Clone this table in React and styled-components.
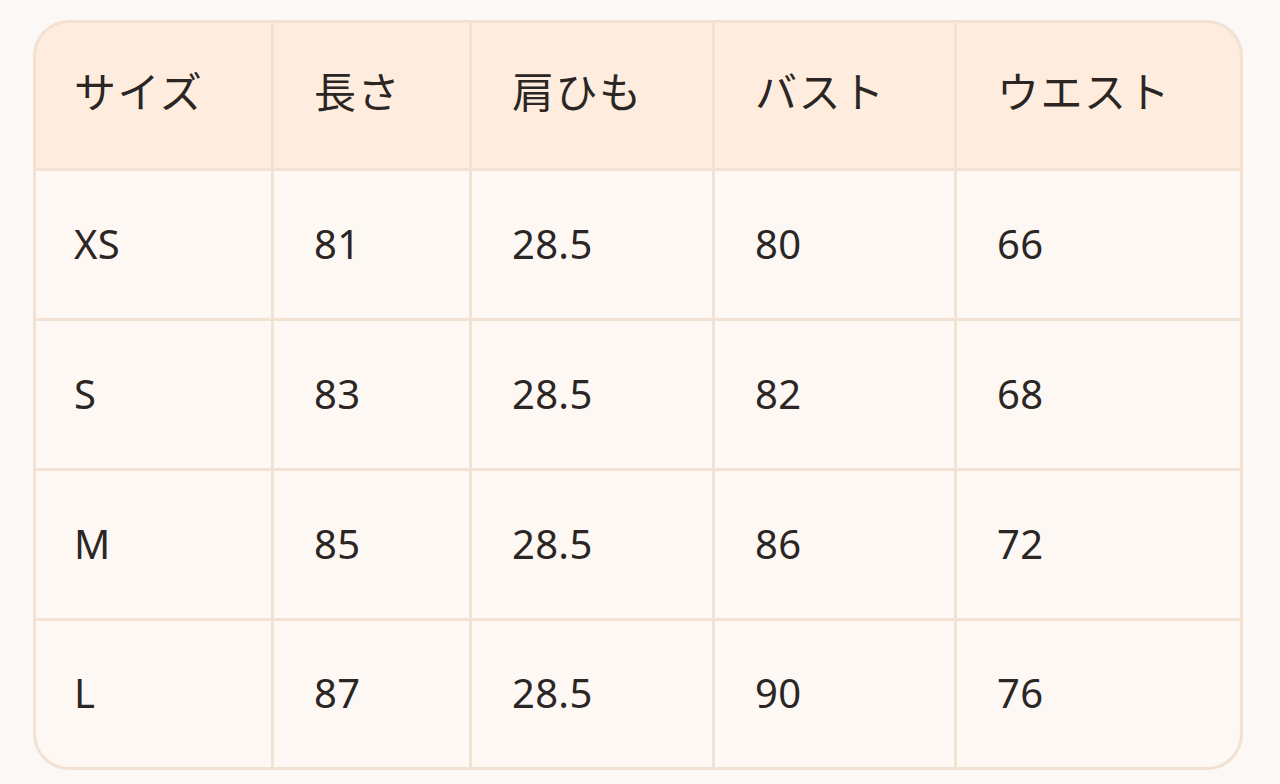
import React from 'react';
import styled, { createGlobalStyle } from 'styled-components';

const GlobalStyle = createGlobalStyle`
    html, body {
        margin: 0;
        padding: 0;
        background: #fcf8f5;
    }
    body {
        font-family: "Noto Sans", "Noto Sans CJK JP", sans-serif;
        color: #2b2623;
    }
`;

const Page = styled.div`
    width: 1280px;
    height: 784px;
    padding: 20px 0 0 33px;
    box-sizing: border-box;
`;

const Table = styled.div`
    width: 1210px;
    height: 750px;
    box-sizing: border-box;
    border: 3px solid #f1e2d4;
    border-radius: 36px;
    overflow: hidden;
    background: #f1e2d4;
    display: grid;
    grid-template-columns: 235px 195px 240px 239px 283px;
    grid-template-rows: 145px 147px 147px 147px 146px;
    gap: 3px;
`;

const Cell = styled.div`
    display: flex;
    align-items: center;
    padding-left: ${p => (p.$first ? 38 : 40)}px;
    padding-bottom: ${p => (p.$head ? 8 : 2)}px;
    box-sizing: border-box;
    background: ${p => (p.$head ? '#feeddf' : '#fdf8f4')};
    font-size: ${p => (p.$head ? 42 : 40)}px;
    line-height: 1;
    letter-spacing: ${p => (p.$head ? '1.5px' : '0.3px')};
`;

const headers = ['サイズ', '長さ', '肩ひも', 'バスト', 'ウエスト'];

const rows = [
    ['XS', '81', '28.5', '80', '66'],
    ['S', '83', '28.5', '82', '68'],
    ['M', '85', '28.5', '86', '72'],
    ['L', '87', '28.5', '90', '76'],
];

function App() {
    return (
        <>
            <GlobalStyle />
            <Page>
                <Table>
                    {headers.map((h, i) => (
                        <Cell key={h} $head $first={i === 0}>{h}</Cell>
                    ))}
                    {rows.map(row =>
                        row.map((v, i) => (
                            <Cell key={row[0] + i} $first={i === 0}>{v}</Cell>
                        ))
                    )}
                </Table>
            </Page>
        </>
    );
}

export default App;
